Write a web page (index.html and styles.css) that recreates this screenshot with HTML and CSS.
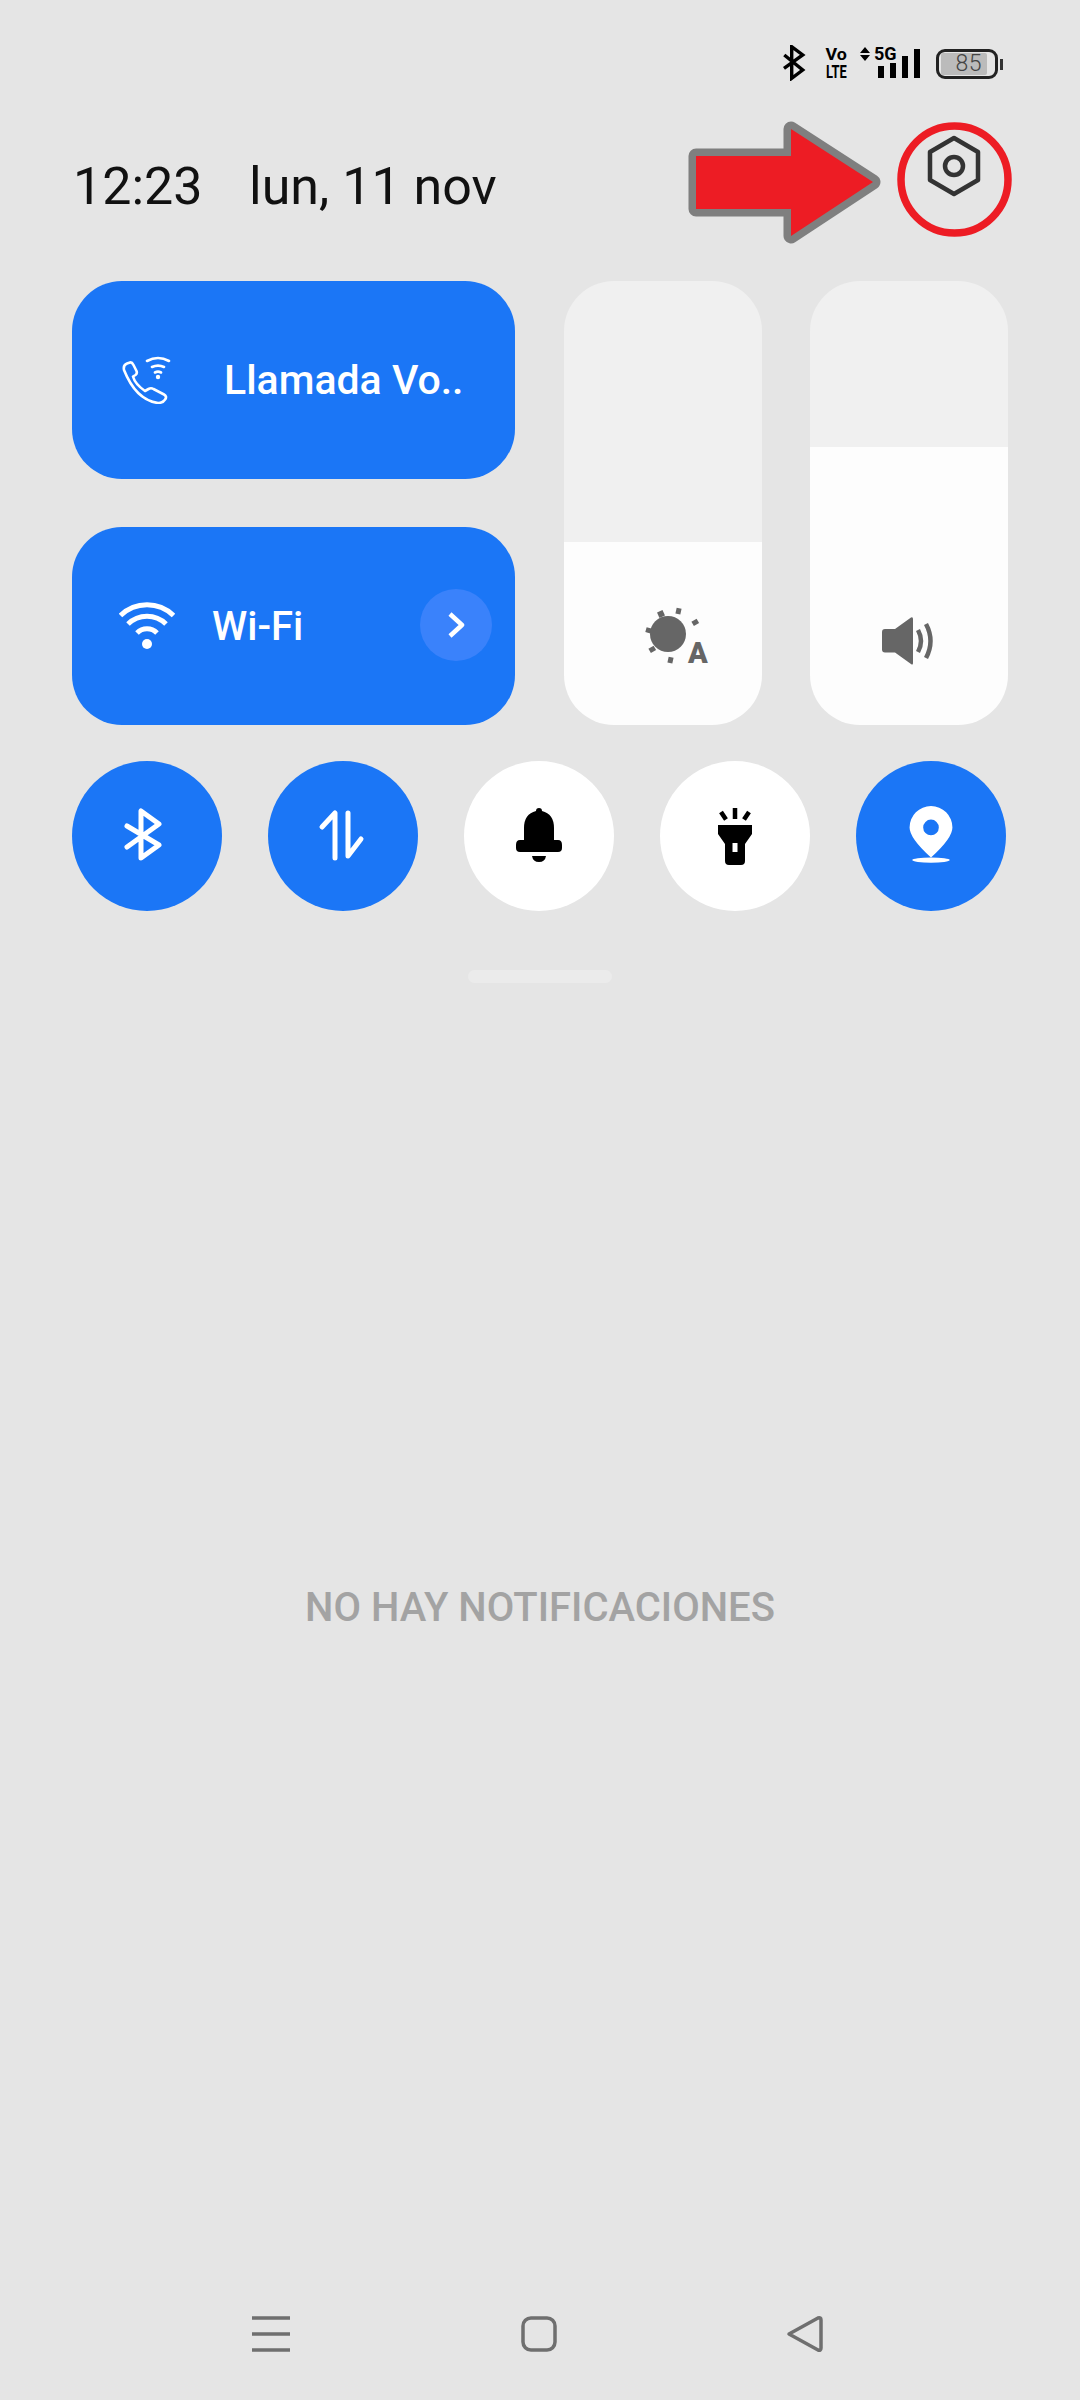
FILE: index.html
```html
<!DOCTYPE html>
<html lang="es">
<head>
<meta charset="utf-8">
<title>Panel rápido</title>
<link rel="stylesheet" href="styles.css">
</head>
<body>
<div class="screen">
  <header class="status">
    <svg class="st-bt" viewBox="0 0 24 36"><path d="M2 23.3 20.7 10 9.7 1.7V33.3L20.7 25 2.300 10"/></svg>
    <div class="volte"><span class="vo">Vo</span><span class="lte">LTE</span></div>
    <div class="net">
      <svg class="updown" viewBox="0 0 10 14"><path d="M5 0 10 6H0ZM0 8H10L5 14Z"/></svg>
      <span class="fiveg">5G</span>
      <div class="bars"><i class="b1"></i><i class="b2"></i><i class="b3"></i><i class="b4"></i></div>
    </div>
    <div class="battery"><div class="bat-body"><div class="bat-level"><span>85</span></div></div><i class="bat-tip"></i></div>
  </header>

  <div class="clock-row">
    <span class="time">12:23</span><span class="date">lun, 11 nov</span>
    <svg class="gear" viewBox="0 0 58 62"><path d="M29 3 53 17V45L29 59 5 45V17Z"/><circle cx="29" cy="31" r="9"/></svg>
  </div>

  <section class="controls">
    <div class="cards">
      <div class="card">
        <svg class="ic-call" viewBox="0 0 50 48"><path class="line" d="M2 14Q1 9 5 7.500L8 6.500Q10 6 11.500 9L14.500 15Q15.500 17.500 13.500 19L11 20.500Q13 28 23 35L26.500 33Q29 31.500 31.500 33L42 38.500Q45 40 43.500 43Q41 47 36 47 14 44 2 14Z"/><path class="line" d="M25 5A23 23 0 0 1 47 5M30 11A14 14 0 0 1 42 11M33 16.500A6 6 0 0 1 39 16.500"/><circle class="dot" cx="36" cy="21" r="2.200"/></svg>
        <span class="card-label call-label">Llamada Vo..</span>
      </div>
      <div class="card">
        <svg class="ic-wifi" viewBox="0 0 56 48"><path class="line" d="M1.500 13.500A38 38 0 0 1 54.500 13.500M9 22A27 27 0 0 1 47 22M18 31A14 14 0 0 1 38 31"/><circle class="dot" cx="28" cy="42" r="5"/></svg>
        <span class="card-label wifi-label">Wi-Fi</span>
        <span class="more"><svg viewBox="0 0 18 28"><path d="M3 3 15 14 3 25"/></svg></span>
      </div>
    </div>
    <div class="slider bright">
      <svg class="ic-bright" viewBox="0 0 66 62"><g class="rays"><rect x="26" y="1" width="6" height="6" transform="rotate(-24 29 4)"/><rect x="44" y="-2" width="5" height="6" transform="rotate(12 46 1)"/><rect x="60" y="10" width="6" height="5" transform="rotate(-30 63 12)"/><rect x="14" y="18" width="6" height="5" transform="rotate(15 17 20)"/><rect x="17" y="37" width="6" height="5" transform="rotate(-30 20 39)"/><rect x="36" y="47" width="5" height="6" transform="rotate(12 38 50)"/></g><circle class="sun" cx="36" cy="24" r="18"/><text class="auto" x="56" y="53">A</text></svg>
    </div>
    <div class="slider vol">
      <svg class="ic-vol" viewBox="0 0 54 48"><path class="cone" d="M3 12H13L29 .5Q31-.5 31 2V46Q31 48.500 29 47L13 35.500H3Q0 35.500 0 32.500V15Q0 12 3 12Z"/><path class="wave" d="M36 13Q42 24 36 35M44 7Q53 24 44 41"/></svg>
    </div>
  </section>

  <section class="toggles">
    <button class="round on"><svg viewBox="0 0 50 60"><path class="s-white" d="M5 41 37 18 19 5V52L37 39 5 20"/></svg></button>
    <button class="round on"><svg viewBox="0 0 50 60"><path class="s-white" d="M4 21 17 7V52M30 7V50L43 33"/></svg></button>
    <button class="round"><svg viewBox="0 0 50 56"><path d="M25 0Q28 0 28 3Q40 6 40 20V32H44Q48 32 48 37V40Q48 44 44 44H6Q2 44 2 40V37Q2 32 6 32H10V20Q10 6 22 3Q22 0 25 0ZM18 48H32Q31 54 25 54 19 54 18 48Z"/></svg></button>
    <button class="round"><svg viewBox="0 0 40 60"><path d="M3 19H37V28L30 38V55Q30 59 26 59H14Q10 59 10 55V38L3 28ZM17.500 37V46H22.500V37Z" fill-rule="evenodd"/><path class="s-black" d="M20 2V13M6 6 11 13.500M34 6 29 13.500"/></svg></button>
    <button class="round on"><svg viewBox="0 0 44 56"><path class="fill-white" fill-rule="evenodd" d="M22 48Q2 30 2 20A20 20 0 0 1 42 20Q42 30 22 48ZM22 12.700A7.300 7.300 0 1 0 22 27.300 7.300 7.300 0 0 0 22 12.700Z"/><ellipse class="fill-white" cx="22" cy="50.500" rx="17.500" ry="2.500"/></svg></button>
  </section>

  <div class="handle"></div>

  <main class="empty">NO HAY NOTIFICACIONES</main>

  <nav class="navbar">
    <svg class="nav-menu" viewBox="0 0 38 38"><path d="M0 3H38M0 19H38M0 35H38"/></svg>
    <svg class="nav-home" viewBox="0 0 36 36"><rect x="2" y="2" width="32" height="32" rx="8"/></svg>
    <svg class="nav-back" viewBox="0 0 38 36"><path d="M3 18 32 2Q35 1 35 4V32Q35 35 32 34Z"/></svg>
  </nav>

  <svg class="callout" viewBox="0 0 1080 260">
    <polygon class="arrow" points="696,156 791,156 791,129 873,182 791,236 791,209 696,209"/>
    <circle class="ring" cx="954.500" cy="179.500" r="53.500"/>
  </svg>
</div>
</body>
</html>
```

FILE: styles.css
```css
* { box-sizing: border-box; }
html, body { margin: 0; padding: 0; }
body { background: #e5e5e5; font-family: Roboto, "Noto Sans", sans-serif; }
.screen { position: relative; width: 1080px; height: 2400px; display: flex; flex-direction: column; overflow: hidden; }

.status { height: 46px; margin-top: 46px; padding-left: 782px; display: flex; align-items: flex-start; color: #000; }
.st-bt { width: 24px; height: 36px; margin-top: -1px; }
.st-bt path { fill: none; stroke: #000; stroke-width: 3.400; }
.volte { width: 24px; margin-left: 18px; display: flex; flex-direction: column; align-items: center; font-weight: 700; line-height: 1; }
.vo { font-size: 17px; height: 16px; transform: scaleX(1.05); }
.lte { font-size: 19px; height: 15px; transform: scaleX(.68); }
.net { position: relative; width: 60px; height: 32px; margin-left: 12px; display: flex; }
.updown { width: 10px; height: 14px; fill: #000; margin-top: 1px; }
.fiveg { font-size: 18px; font-weight: 700; line-height: 15px; margin-left: 4px; }
.bars { position: absolute; left: 18px; bottom: 0; display: flex; align-items: flex-end; gap: 6px; }
.bars i { display: block; width: 6px; background: #000; }
.b1 { height: 12px; } .b2 { height: 15px; } .b3 { height: 22px; } .b4 { height: 29px; }
.battery { display: flex; align-items: center; margin-left: 16px; height: 30px; margin-top: 3px; }
.bat-body { width: 62px; height: 30px; border: 3px solid #222; border-radius: 9px; padding: 1px 9px 1px 2px; }
.bat-level { width: 46px; height: 22px; background: #bbb; border-radius: 2px; display: flex; align-items: center; justify-content: flex-end; padding-right: 5px; }
.bat-level span { font-size: 23px; font-weight: 300; line-height: 22px; color: #444; letter-spacing: .5px; }
.bat-tip { width: 3px; height: 11px; background: #333; margin-left: 2px; }

.clock-row { position: relative; height: 189px; padding: 0 0 0 73px; display: flex; align-items: center; font-size: 52px; color: #111; line-height: 1; margin-top: 0; }
.time { width: 176px; }
.gear { position: absolute; left: 925px; top: 43px; width: 58px; height: 62px; }
.gear path, .gear circle { fill: none; stroke: #333; stroke-width: 4.500; stroke-linejoin: round; }

.controls { height: 444px; padding: 0 72px; display: flex; }
.controls, .clock-row { flex: none; }
.cards { width: 443px; display: flex; flex-direction: column; gap: 48px; margin-right: 49px; }
.card { position: relative; height: 198px; border-radius: 50px; background: #1b76f6; color: #fff; display: flex; align-items: center; }
.card-label { font-size: 41px; font-weight: 500; white-space: nowrap; }
.line { fill: none; stroke: #fff; stroke-width: 2.600; stroke-linecap: round; stroke-linejoin: round; }
.dot { fill: #fff; }
.ic-call { width: 50px; height: 48px; margin-left: 50px; }
.call-label { margin-left: 52px; }
.ic-wifi { width: 56px; height: 48px; margin-left: 47px; }
.ic-wifi .line { stroke-width: 5; stroke-linecap: butt; }
.wifi-label { margin-left: 37px; font-size: 40px; }
.more { position: absolute; right: 23px; top: 62px; width: 72px; height: 72px; border-radius: 50%; background: #3a82fb; display: flex; align-items: center; justify-content: center; }
.more svg { width: 18px; height: 28px; }
.more path { fill: none; stroke: #fff; stroke-width: 4.500; stroke-linejoin: round; }

.slider { position: relative; width: 198px; height: 444px; border-radius: 50px; overflow: hidden; background: #f0f0f0; display: flex; flex-direction: column; justify-content: flex-end; align-items: center; }
.slider.vol { margin-left: 48px; }
.bright { background: linear-gradient(#f0f0f0 261px, #fdfdfd 261px); padding-bottom: 53px; }
.vol { background: linear-gradient(#f0f0f0 166px, #fdfdfd 166px); padding-bottom: 60px; }
.ic-bright { width: 66px; height: 62px; overflow: visible; margin-left: 4px; }
.rays rect, .sun { fill: #666; }
.auto { font-family: Roboto, sans-serif; font-size: 29px; font-weight: 900; fill: #666; stroke: #fdfdfd; stroke-width: 3px; paint-order: stroke; }
.ic-vol { width: 54px; height: 48px; }
.cone { fill: #666; }
.wave { fill: none; stroke: #666; stroke-width: 4.500; }

.toggles { margin-top: 36px; height: 150px; padding-left: 72px; display: flex; gap: 46px; }
.round { width: 150px; height: 150px; border: 0; padding: 0; border-radius: 50%; background: #fff; display: flex; align-items: center; justify-content: center; }
.round.on { background: #1b76f6; }
.round svg { width: 50px; height: 60px; overflow: visible; }
.s-white { fill: none; stroke: #fff; stroke-width: 5; stroke-linejoin: round; stroke-linecap: round; }
.s-black { fill: none; stroke: #000; stroke-width: 4.500; }
.fill-white { fill: #fff; }

.handle { width: 144px; height: 13px; margin: 59px 0 0 468px; border-radius: 7px; background: #ebebeb; }

.empty { position: absolute; left: 0; right: 0; top: 1584px; text-align: center; font-size: 40px; line-height: 48px; font-weight: 500; color: #a3a3a3; }

.navbar { position: absolute; left: 0; right: 0; top: 2315px; }
.navbar svg { position: absolute; top: 0; }
.nav-menu { left: 252px; width: 38px; height: 38px; }
.nav-menu path { fill: none; stroke: #6f6f6f; stroke-width: 3.500; }
.nav-home { left: 521px; width: 36px; height: 38px; }
.nav-home rect { fill: none; stroke: #6f6f6f; stroke-width: 3.500; }
.nav-back { left: 786px; width: 38px; height: 38px; }
.nav-back path { fill: none; stroke: #6f6f6f; stroke-width: 3.500; stroke-linejoin: round; }

.callout { position: absolute; left: 0; top: 0; width: 1080px; height: 260px; pointer-events: none; }
.arrow { fill: #ed1c24; stroke: #7f7f7f; stroke-width: 15; stroke-linejoin: round; paint-order: stroke; }
.ring { fill: none; stroke: #ed1c24; stroke-width: 7.500; }
```
